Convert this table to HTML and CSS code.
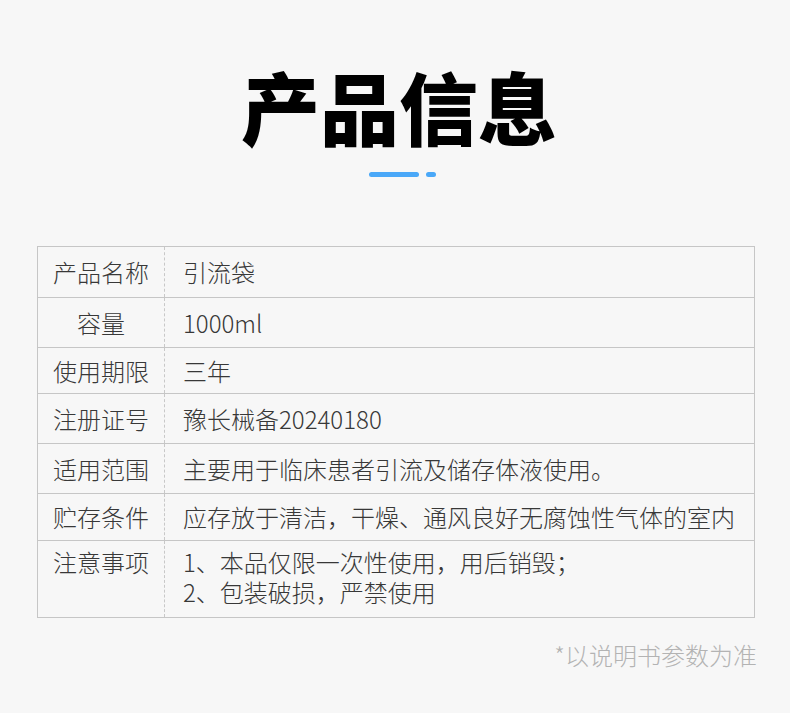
FILE: index.html
```html
<!DOCTYPE html>
<html lang="zh-CN">
<head>
<meta charset="utf-8">
<title>产品信息</title>
<link rel="stylesheet" href="styles.css">
</head>
<body>
<div class="page">
  <header class="head">
    <h1 class="title">产品信息</h1>
    <div class="accent"><span class="bar-long"></span><span class="bar-short"></span></div>
  </header>
  <div class="spec">
    <div class="row r1"><div class="label">产品名称</div><div class="value">引流袋</div></div>
    <div class="row r2"><div class="label">容量</div><div class="value">1000ml</div></div>
    <div class="row r3"><div class="label">使用期限</div><div class="value">三年</div></div>
    <div class="row r4"><div class="label">注册证号</div><div class="value">豫长械备20240180</div></div>
    <div class="row r5"><div class="label">适用范围</div><div class="value">主要用于临床患者引流及储存体液使用。</div></div>
    <div class="row r6"><div class="label">贮存条件</div><div class="value">应存放于清洁，干燥、通风良好无腐蚀性气体的室内</div></div>
    <div class="row r7 multi"><div class="label">注意事项</div><div class="value"><div class="line">1、本品仅限一次性使用，用后销毁；</div><div class="line">2、包装破损，严禁使用</div></div></div>
  </div>
  <p class="note">*以说明书参数为准</p>
</div>
</body>
</html>
```
FILE: styles.css
```css
html, body {
  margin: 0;
  padding: 0;
  background: #f7f7f7;
}
.page {
  width: 790px;
  height: 713px;
  font-family: "Noto Sans CJK SC", "Noto Sans", sans-serif;
  color: #383838;
  overflow: hidden;
}
.head {
  display: flex;
  flex-direction: column;
  align-items: center;
  padding-top: 57px;
}
.title {
  margin: 0;
  font-size: 79px;
  line-height: 97px;
  font-weight: 900;
  color: #000;
  padding-left: 8px;
}
.accent {
  display: flex;
  gap: 7px;
  margin-top: 18px;
  padding-left: 15px;
}
.bar-long, .bar-short {
  display: block;
  height: 5px;
  border-radius: 3px;
  background: #4aa8f8;
}
.bar-long { width: 50px; }
.bar-short { width: 10px; }
.spec {
  margin: 69px 35px 0 37px;
  border: 1px solid #c6c6c6;
  border-bottom: none;
}
.row {
  display: grid;
  grid-template-columns: 127px 1fr;
  border-bottom: 1px solid #c6c6c6;
  font-size: 24px;
  line-height: 30px;
  font-weight: 300;
}
.label {
  display: flex;
  align-items: center;
  justify-content: center;
  border-right: 1px dashed #c8c8c8;
}
.value {
  display: flex;
  align-items: center;
  padding-left: 18px;
}
.r1 { height: 50px; }
.r2 { height: 49px; }
.r3 { height: 45px; }
.r4 { height: 49px; }
.r5 { height: 49px; }
.r6 { height: 46px; }
.r7 { height: 76px; }
.multi .label, .multi .value {
  align-items: flex-start;
  padding-top: 6px;
}
.multi .value {
  flex-direction: column;
  line-height: 30px;
}
.note {
  margin: 22px 33px 0 0;
  text-align: right;
  font-size: 24px;
  line-height: 30px;
  font-weight: 300;
  color: #b3b3b3;
}
```
